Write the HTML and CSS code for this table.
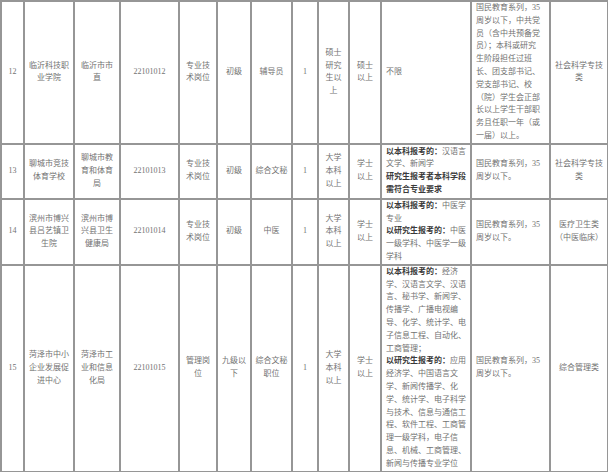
FILE: index.html
```html
<!DOCTYPE html>
<html lang="zh-CN">
<head>
<meta charset="utf-8">
<title>岗位表</title>
<link rel="stylesheet" href="styles.css">
</head>
<body>
<table class="posts">
  <colgroup>
    <col class="c-no"><col class="c-unit"><col class="c-dept"><col class="c-code"><col class="c-type">
    <col class="c-level"><col class="c-name"><col class="c-num"><col class="c-edu"><col class="c-deg">
    <col class="c-major"><col class="c-other"><col class="c-cat">
  </colgroup>
  <tbody>
    <tr class="r12">
      <td>12</td>
      <td>临沂科技职<br>业学院</td>
      <td>临沂市市<br>直</td>
      <td>22101012</td>
      <td>专业技<br>术岗位</td>
      <td>初级</td>
      <td>辅导员</td>
      <td>1</td>
      <td>硕士<br>研究<br>生以<br>上</td>
      <td>硕士<br>以上</td>
      <td class="left">不限</td>
      <td class="left">国民教育系列，35<br>周岁以下，中共党<br>员（含中共预备党<br>员）；本科或研究<br>生阶段担任过班<br>长、团支部书记、<br>党支部书记、校<br>（院）学生会正部<br>长以上学生干部职<br>务且任职一年（或<br>一届）以上。</td>
      <td>社会科学专技<br>类</td>
    </tr>
    <tr class="r13">
      <td>13</td>
      <td>聊城市竞技<br>体育学校</td>
      <td>聊城市教<br>育和体育<br>局</td>
      <td>22101013</td>
      <td>专业技<br>术岗位</td>
      <td>初级</td>
      <td>综合文秘</td>
      <td>1</td>
      <td>大学<br>本科<br>以上</td>
      <td>学士<br>以上</td>
      <td class="left"><b>以本科报考的：</b>汉语言<br>文学、新闻学<br><b>研究生报考者本科学段<br>需符合专业要求</b></td>
      <td class="left">国民教育系列，35<br>周岁以下。</td>
      <td>社会科学专技<br>类</td>
    </tr>
    <tr class="r14">
      <td>14</td>
      <td>滨州市博兴<br>县吕艺镇卫<br>生院</td>
      <td>滨州市博<br>兴县卫生<br>健康局</td>
      <td>22101014</td>
      <td>专业技<br>术岗位</td>
      <td>初级</td>
      <td>中医</td>
      <td>1</td>
      <td>大学<br>本科<br>以上</td>
      <td>学士<br>以上</td>
      <td class="left"><b>以本科报考的：</b>中医学<br>专业<br><b>以研究生报考的：</b>中医<br>一级学科、中医学一级<br>学科</td>
      <td class="left">国民教育系列，35<br>周岁以下。</td>
      <td>医疗卫生类<br>（中医临床）</td>
    </tr>
    <tr class="r15">
      <td>15</td>
      <td>菏泽市中小<br>企业发展促<br>进中心</td>
      <td>菏泽市工<br>业和信息<br>化局</td>
      <td>22101015</td>
      <td>管理岗<br>位</td>
      <td>九级以<br>下</td>
      <td>综合文秘<br>职位</td>
      <td>1</td>
      <td>大学<br>本科<br>以上</td>
      <td>学士<br>以上</td>
      <td class="left"><b>以本科报考的：</b>经济<br>学、汉语言文学、汉语<br>言、秘书学、新闻学、<br>传播学、广播电视编<br>导、化学、统计学、电<br>子信息工程、自动化、<br>工商管理；<br><b>以研究生报考的：</b>应用<br>经济学、中国语言文<br>学、新闻传播学、化<br>学、统计学、电子科学<br>与技术、信息与通信工<br>程、软件工程、工商管<br>理一级学科，电子信<br>息、机械、工商管理、<br>新闻与传播专业学位</td>
      <td class="left">国民教育系列，35<br>周岁以下。</td>
      <td>综合管理类</td>
    </tr>
  </tbody>
</table>
</body>
</html>
```

FILE: styles.css
```css
html, body {
  margin: 0;
  padding: 0;
  background: #ffffff;
}

.posts {
  border-collapse: collapse;
  table-layout: fixed;
  width: 608px;
  font-family: "Liberation Serif", "Noto Sans CJK SC", serif;
  font-size: 8px;
  line-height: 12.8px;
  color: #727272;
}

.posts td {
  border: 2px solid #969696;
  padding: 0 3px;
  text-align: center;
  vertical-align: middle;
  white-space: nowrap;
  overflow: hidden;
}

.posts td.left {
  text-align: left;
  padding-left: 4px;
}

.posts b {
  color: #3a3a3a;
  font-weight: bold;
}

.c-no { width: 23px; }
.c-unit { width: 50px; }
.c-dept { width: 46px; }
.c-code { width: 59px; }
.c-type { width: 38px; }
.c-level { width: 34px; }
.c-name { width: 41px; }
.c-num { width: 26px; }
.c-edu { width: 31px; }
.c-deg { width: 32px; }
.c-major { width: 90px; }
.c-other { width: 79px; }
.c-cat { width: 58px; }

.r12 { height: 142px; }
.r13 { height: 55px; }
.r14 { height: 64px; }
.r15 { height: 207px; }
```
